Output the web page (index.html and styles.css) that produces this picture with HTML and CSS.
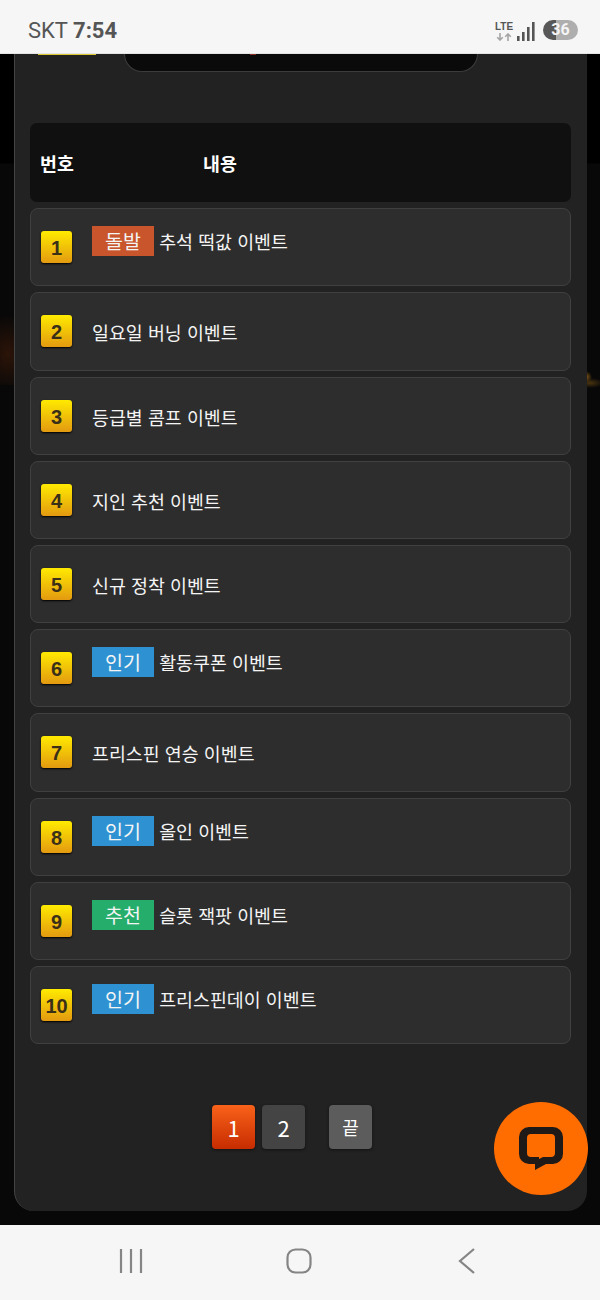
FILE: index.html
```html
<!DOCTYPE html>
<html lang="ko">
<head>
    <meta charset="UTF-8">
    <meta name="viewport" content="width=device-width, initial-scale=1.0">
    <title>이벤트</title>
    <link rel="stylesheet" href="styles.css">
</head>
<body>

<div class="statusbar">
    <div class="status-left">SKT <b>7:54</b></div>
    <div class="status-right">
        <div class="lte">
            <span>LTE</span>
            <svg width="16" height="8" viewBox="0 0 16 8">
                <path d="M4 0v7M1.2 4.2 4 7l2.8-2.8" fill="none" stroke="#a5a5a5" stroke-width="1.6"/>
                <path d="M12 8V1M9.2 3.8 12 1l2.8 2.8" fill="none" stroke="#a5a5a5" stroke-width="1.6"/>
            </svg>
        </div>
        <svg class="signal" width="18" height="19" viewBox="0 0 18 19">
            <rect x="0" y="14" width="2.6" height="5" fill="#555"/>
            <rect x="5" y="10" width="2.6" height="9" fill="#555"/>
            <rect x="10" y="5" width="2.6" height="14" fill="#555"/>
            <rect x="15" y="0" width="2.6" height="19" fill="#555"/>
        </svg>
        <div class="battery">36</div>
    </div>
</div>

<div class="main">
    <div class="panel">
        <div class="panel-top">
            <div class="yellow-edge"></div>
            <div class="hero-bottom"><span class="red-dot"></span></div>
        </div>

        <div class="table-head">
            <span class="head-no">번호</span>
            <span class="head-title">내용</span>
        </div>

        <div class="row">
            <span class="num">1</span>
            <div class="title has-tag"><span class="tag tag-hot">돌발</span> 추석 떡값 이벤트</div>
        </div>
        <div class="row">
            <span class="num">2</span>
            <div class="title">일요일 버닝 이벤트</div>
        </div>
        <div class="row">
            <span class="num">3</span>
            <div class="title">등급별 콤프 이벤트</div>
        </div>
        <div class="row">
            <span class="num">4</span>
            <div class="title">지인 추천 이벤트</div>
        </div>
        <div class="row">
            <span class="num">5</span>
            <div class="title">신규 정착 이벤트</div>
        </div>
        <div class="row">
            <span class="num">6</span>
            <div class="title has-tag"><span class="tag tag-pop">인기</span> 활동쿠폰 이벤트</div>
        </div>
        <div class="row">
            <span class="num">7</span>
            <div class="title">프리스핀 연승 이벤트</div>
        </div>
        <div class="row">
            <span class="num">8</span>
            <div class="title has-tag"><span class="tag tag-pop">인기</span> 올인 이벤트</div>
        </div>
        <div class="row">
            <span class="num">9</span>
            <div class="title has-tag"><span class="tag tag-rec">추천</span> 슬롯 잭팟 이벤트</div>
        </div>
        <div class="row">
            <span class="num">10</span>
            <div class="title has-tag"><span class="tag tag-pop">인기</span> 프리스핀데이 이벤트</div>
        </div>

        <div class="pagination">
            <a class="page page-active">1</a>
            <a class="page">2</a>
            <a class="page page-last">끝</a>
        </div>
    </div>

    <a class="chat-btn">
        <svg width="44" height="43" viewBox="0 0 44 43">
            <path fill="#1f1a17" fill-rule="evenodd" d="M10 0H34A10 10 0 0 1 44 10V27A10 10 0 0 1 34 37H27L16 43V37H10A10 10 0 0 1 0 27V10A10 10 0 0 1 10 0ZM12 7H32A4 4 0 0 1 36 11V26A4 4 0 0 1 32 30H24L20 32V30H12A4 4 0 0 1 8 26V11A4 4 0 0 1 12 7Z"/>
        </svg>
    </a>
</div>

<div class="navbar">
    <svg class="nav-menu" width="24" height="26" viewBox="0 0 24 26">
        <path d="M2 1v24M12 1v24M22 1v24" stroke="#858585" stroke-width="2.2" fill="none"/>
    </svg>
    <svg class="nav-home" width="26" height="26" viewBox="0 0 26 26">
        <rect x="1.5" y="1.5" width="23" height="23" rx="8" stroke="#858585" stroke-width="2.2" fill="none"/>
    </svg>
    <svg class="nav-back" width="18" height="26" viewBox="0 0 18 26">
        <path d="M16 1 2 13l14 12" stroke="#858585" stroke-width="2.2" fill="none"/>
    </svg>
</div>

</body>
</html>
```

FILE: styles.css
```css
* {
    box-sizing: border-box;
}
body {
    margin: 0;
    width: 600px;
    height: 1300px;
    overflow: hidden;
    display: flex;
    flex-direction: column;
    background: #000;
    font-family: "Noto Sans CJK KR", "Noto Sans", sans-serif;
}
.statusbar {
    height: 54px;
    flex: none;
    background: #f6f6f6;
    border-bottom: 1px solid #e4e4e4;
    display: flex;
    justify-content: space-between;
    align-items: flex-start;
    padding: 19px 22px 0 28px;
}
.status-left {
    font-family: Roboto, sans-serif;
    font-size: 22px;
    line-height: 24px;
    color: #555;
}
.status-left b {
    font-weight: 700;
}
.status-right {
    display: flex;
    align-items: flex-start;
    padding-top: 1px;
}
.lte {
    width: 18px;
    margin-top: 2px;
    margin-right: 4px;
    display: flex;
    flex-direction: column;
    align-items: center;
}
.lte span {
    font-family: "Liberation Sans", sans-serif;
    font-size: 10px;
    line-height: 10px;
    font-weight: bold;
    color: #555;
}
.lte svg {
    margin-top: 1px;
}
.signal {
    margin-top: 2px;
    margin-right: 8px;
}
.battery {
    width: 35px;
    height: 20px;
    border-radius: 10px;
    background: linear-gradient(90deg, #585858 0, #585858 13px, #aeaeae 13px);
    color: #f4f4f4;
    font-family: Roboto, sans-serif;
    font-size: 16px;
    font-weight: 700;
    line-height: 20px;
    text-align: center;
}

.main {
    flex: 1;
    position: relative;
    padding: 0 13px 14px 14px;
    display: flex;
    background:
        radial-gradient(ellipse 14px 5px at 590px 329px, #4a3410 0, rgba(0, 0, 0, 0) 100%) no-repeat,
        radial-gradient(circle at 586px 323px, #8a5a14 0, rgba(0, 0, 0, 0) 6px) no-repeat,
        radial-gradient(ellipse 30px 40px at 8px 70px, #2c1408 0, rgba(0, 0, 0, 0) 100%) 0 230px / 14px 101px no-repeat,
        linear-gradient(#000 0, #000 109px, #080808 110px);
}
.panel {
    flex: 1;
    background: #222;
    border-left: 1px solid #444;
    border-radius: 0 0 20px 20px;
    padding: 0 16px 0 15px;
}
.panel-top {
    display: flex;
    align-items: flex-start;
    height: 18px;
}
.yellow-edge {
    width: 58px;
    height: 1px;
    margin-left: 8px;
    background: #d8c832;
}
.hero-bottom {
    width: 354px;
    height: 18px;
    margin-left: 28px;
    background: #0a0a0a;
    border: 1px solid #3c3c3c;
    border-top: none;
    border-radius: 0 0 24px 24px;
}
.red-dot {
    display: block;
    width: 6px;
    height: 1px;
    margin-left: 125px;
    background: #8a2a20;
}
.table-head {
    height: 79px;
    margin-top: 51px;
    margin-bottom: 6.2px;
    background: #101010;
    border-radius: 7px;
    display: flex;
    align-items: center;
    color: #fff;
    font-size: 18.4px;
    font-weight: 700;
}
.head-no {
    width: 173px;
    padding-left: 10px;
}
.row {
    height: 78.2px;
    margin-bottom: 6px;
    background: #2d2d2d;
    border: 1px solid #404040;
    border-radius: 8px;
    display: flex;
    align-items: flex-start;
    padding-left: 10px;
    color: #f4f4f4;
}
.num {
    width: 31px;
    height: 32px;
    margin-top: 22px;
    margin-right: 20px;
    flex: none;
    border-radius: 3px;
    background: linear-gradient(#ffea00, #e39a10);
    box-shadow: 0 1px 2px #000;
    color: #3a3018;
    font-family: "Liberation Sans", sans-serif;
    font-size: 20px;
    font-weight: 700;
    line-height: 34px;
    text-align: center;
}
.title {
    margin-top: 26px;
    font-size: 18.4px;
    line-height: 26px;
}
.title.has-tag {
    margin-top: 17px;
    line-height: 30px;
}
.tag {
    display: inline-block;
    width: 62px;
    height: 30px;
    vertical-align: top;
    font-size: 19.5px;
    line-height: 29px;
    text-align: center;
}
.tag-hot {
    background: #c8552b;
}
.tag-pop {
    background: #2e92d2;
}
.tag-rec {
    background: #25ad6b;
}
.pagination {
    display: flex;
    margin-top: 61px;
    padding-left: 182px;
}
.page {
    width: 43px;
    height: 44px;
    margin-right: 7px;
    border-radius: 4px;
    background: #444;
    box-shadow: 0 1px 3px #111;
    color: #fff;
    font-size: 22px;
    line-height: 44px;
    text-align: center;
}
.page-active {
    background: linear-gradient(#f9621a, #c72c00);
}
.page-last {
    margin-left: 17px;
    background: #5c5c5c;
    font-size: 18px;
}
.chat-btn {
    position: absolute;
    left: 494px;
    top: 1048px;
    width: 94px;
    height: 93px;
    border-radius: 50%;
    background: #ff6d00;
    display: flex;
    align-items: center;
    justify-content: center;
}

.navbar {
    height: 75px;
    flex: none;
    background: #f6f6f6;
    display: flex;
    align-items: flex-start;
    padding: 23px 0 0 119px;
}
.nav-home {
    margin-left: 143px;
}
.nav-back {
    margin-left: 146px;
}
```
